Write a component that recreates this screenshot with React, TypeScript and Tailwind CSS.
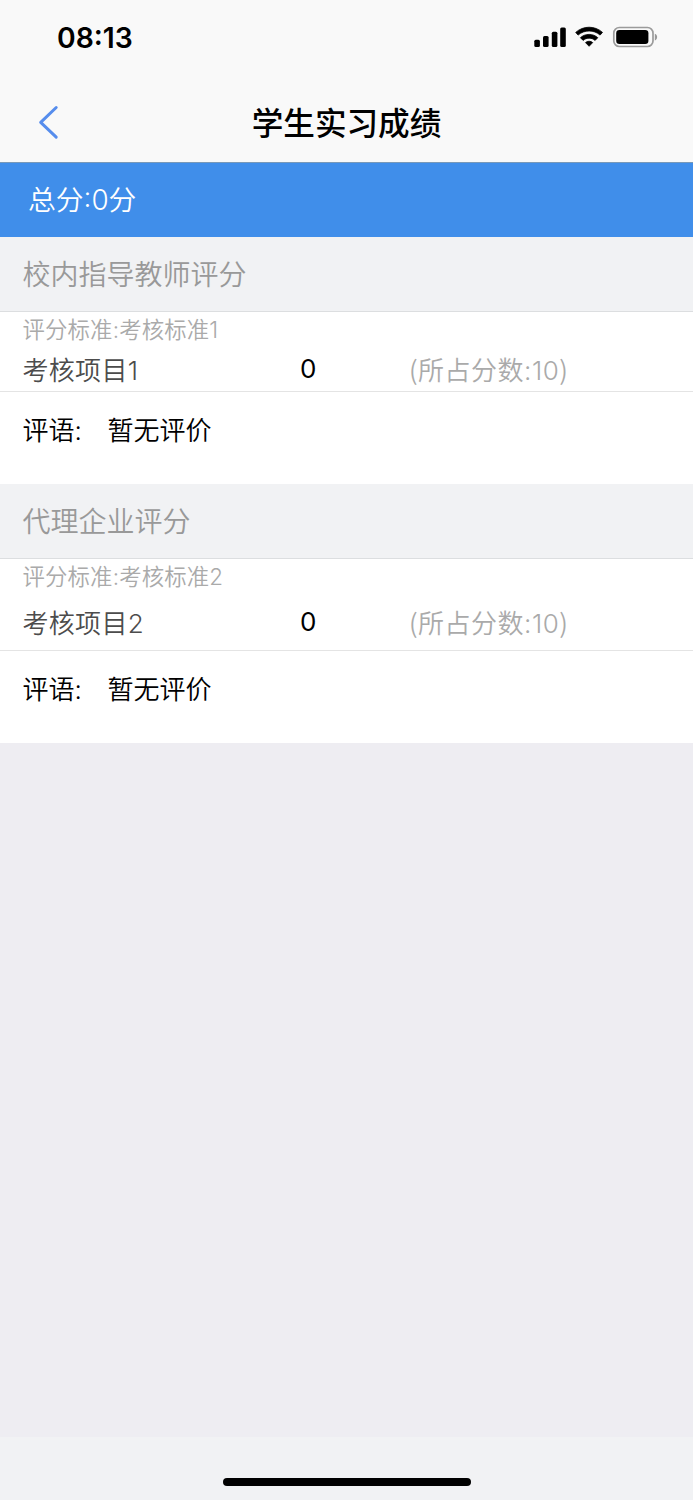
type Section = {
  title: string;
  standard: string;
  item: string;
  score: number;
  share: number;
  rowClass: string;
};

const sections: Section[] = [
  { title: '校内指导教师评分', standard: '考核标准1', item: '考核项目1', score: 0, share: 10, rowClass: 'h-[45px]' },
  { title: '代理企业评分', standard: '考核标准2', item: '考核项目2', score: 0, share: 10, rowClass: 'h-[57px]' },
];

function StatusIcons() {
  return (
    <svg width="126" height="24" viewBox="0 0 126 24" className="mb-[2px] block">
      <rect x="0.3" y="14.7" width="5.6" height="7.3" rx="1.5" />
      <rect x="9" y="11" width="5.6" height="11" rx="1.5" />
      <rect x="17.8" y="6.7" width="5.6" height="15.3" rx="1.5" />
      <rect x="26.2" y="2.4" width="5.6" height="19.6" rx="1.5" />
      <g stroke="#000000" strokeLinejoin="round" strokeWidth="0.8">
        <path d="M41.7 7.4 C49.3 0.5 60.9 0.5 68.5 7.4 L66.1 10.1 C60 4.6 50.2 4.6 44.1 10.1 Z" />
        <path d="M46.4 12.7 C51.3 8.3 58.9 8.3 63.8 12.7 L61.1 15.4 C57.8 12.4 52.4 12.4 49.1 15.4 Z" />
        <path d="M51.5 17.6 C53.6 15.8 56.6 15.8 58.7 17.6 L55.1 21.3 Z" />
      </g>
      <rect x="79.8" y="2.5" width="39.2" height="19" rx="5.6" fill="none" stroke="#9b9b9b" strokeWidth="1.7" />
      <rect x="82.2" y="5" width="32.2" height="14" rx="3.2" />
      <path d="M120.8 8.7 C123.9 9.7 123.9 14.4 120.8 15.4 Z" fill="#999999" />
    </svg>
  );
}

function ScoreSection({ section }: { section: Section }) {
  return (
    <section className="bg-white">
      <h2 className="flex h-[75px] items-center border-b border-[#dcdee0] bg-[#f1f2f4] pt-[2px] pl-[22.5px] text-[28px] font-[350] text-[#999999]">
        {section.title}
      </h2>
      <p className="flex h-[35px] items-center pt-[2px] pl-[22.5px] text-[22.4px] leading-none font-[350] tracking-[0.15px] text-[#aaaaaa]">
        评分标准:{section.standard}
      </p>
      <div className={`flex items-center border-b border-[#e4e4e4] pl-[22.5px] text-[26px] leading-none ${section.rowClass}`}>
        <span className="w-[277.5px] pt-[4px] font-[350] tracking-[0.3px] text-[#4c4c4c]">{section.item}</span>
        <span className="w-[109px] text-black">{section.score}</span>
        <span className="pt-[2px] font-[350] tracking-[0.5px] text-[#aaaaaa]">
          <span className="font-['Noto_Sans_CJK_SC',sans-serif]">(</span>所占分数:{section.share}
          <span className="font-['Noto_Sans_CJK_SC',sans-serif]">)</span>
        </span>
      </div>
      <div className="flex h-[92px] items-start pt-[26px] pl-[22.5px] text-[26px] leading-[26px] font-[350] text-black">
        <span className="w-[85px]">评语:</span>
        <span>暂无评价</span>
      </div>
    </section>
  );
}

export default function App() {
  return (
    <main className="flex h-[1500px] w-[693px] flex-col overflow-hidden bg-[#eeedf2] font-['Inter','Noto_Sans_CJK_SC',sans-serif]">
      <header className="h-[163px] border-b border-[#7899b9] bg-[#f9f9f9]">
        <div className="flex h-[75px] items-center justify-between pr-[33px] pl-[57px]">
          <span className="pt-[1px] text-[28.3px] leading-none font-semibold">08:13</span>
          <StatusIcons />
        </div>
        <nav className="grid h-[87px] grid-cols-[100px_1fr_100px] items-center">
          <button aria-label="返回" className="flex h-[44px] items-center pt-[6px] pl-[35px]">
            <svg width="24" height="38" viewBox="0 0 24 38" fill="none" stroke="#568ded" strokeWidth="3" strokeLinecap="round" strokeLinejoin="round">
              <path d="M21.2 4.5 L5.7 19.4 L21.2 34.2" />
            </svg>
          </button>
          <h1 className="pt-[10px] text-center text-[31.6px] leading-none font-medium">学生实习成绩</h1>
        </nav>
      </header>
      <div className="flex h-[74px] items-center bg-[#408eea] pt-[2px] pl-[28px] text-[27.8px] font-[350] text-white">总分:0分</div>
      {sections.map((section) => (
        <ScoreSection key={section.title} section={section} />
      ))}
      <footer className="mt-auto flex h-[63px] items-end justify-center bg-[#f1f2f4] pb-[14px]">
        <div className="h-[8px] w-[248px] rounded-full bg-black" />
      </footer>
    </main>
  );
}
